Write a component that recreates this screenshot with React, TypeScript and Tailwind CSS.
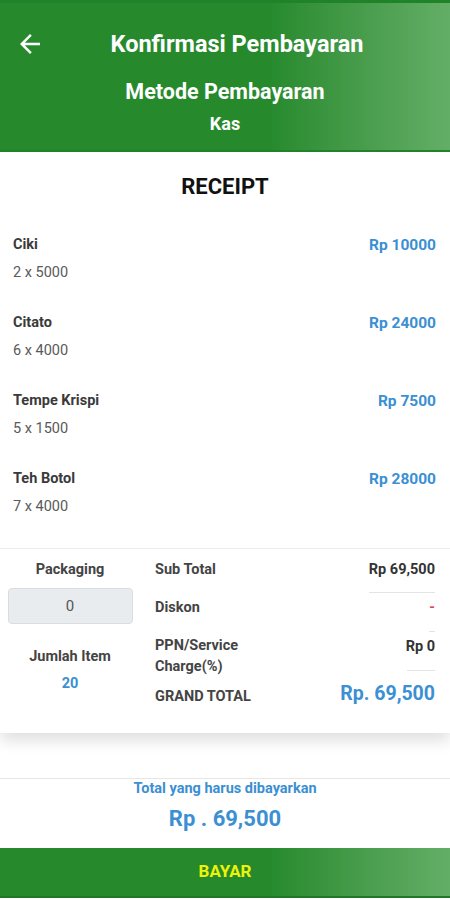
const items = [
  { name: "Ciki", qty: "2 x 5000", price: "Rp 10000" },
  { name: "Citato", qty: "6 x 4000", price: "Rp 24000" },
  { name: "Tempe Krispi", qty: "5 x 1500", price: "Rp 7500" },
  { name: "Teh Botol", qty: "7 x 4000", price: "Rp 28000" },
];

function BackArrow() {
  return (
    <svg viewBox="0 0 24 24" className="w-[30px] h-[30px]" fill="currentColor">
      <path d="M20 11H7.83l5.59-5.59L12 4l-8 8 8 8 1.41-1.41L7.83 13H20v-2z" />
    </svg>
  );
}

export default function App() {
  return (
    <div className="w-[450px] h-[900px] bg-white flex flex-col overflow-hidden font-['Roboto',sans-serif]">
      <header className="h-[152px] shrink-0 bg-gradient-to-r from-[#268a2d] from-60% to-[#63ae67] border-t-[3px] border-b-[2px] border-[#20832a] text-white flex flex-col items-center relative">
        <button className="absolute left-[15px] top-[26px]">
          <BackArrow />
        </button>
        <h1 className="mt-[26px] pl-[24px] text-[23.5px] font-bold leading-[30px]">Konfirmasi Pembayaran</h1>
        <p className="mt-[19px] text-[21.5px] font-bold leading-[28px]">Metode Pembayaran</p>
        <p className="mt-[7px] text-[18px] font-bold leading-[22px]">Kas</p>
      </header>

      <section className="bg-white shadow-[0_8px_14px_rgba(0,0,0,0.12)] pb-[26px]">
        <h2 className="text-center text-[22px] font-bold text-[#111] mt-[20px] leading-[30px]">RECEIPT</h2>
        <div className="mt-[32px] px-[13px]">
          {items.map((it) => (
            <div key={it.name} className="flex justify-between h-[78px]">
              <div>
                <p className="text-[14.5px] font-bold text-[#3a3a3a] leading-[22px]">{it.name}</p>
                <p className="mt-[6px] text-[14.5px] text-[#5a5a5a] leading-[22px]">{it.qty}</p>
              </div>
              <p className="text-[15.5px] font-bold text-[#3b8fd2] leading-[22px] mr-[1px]">{it.price}</p>
            </div>
          ))}
        </div>
        <div className="mt-[2px] border-t border-[#ececec] flex pt-[10px]">
          <div className="w-[140px] flex flex-col items-center">
            <p className="text-[14.5px] font-bold text-[#444] leading-[22px]">Packaging</p>
            <div className="mt-[7px] w-[125px] h-[36px] bg-[#e9ecef] border border-[#d9dde1] rounded-[4px] flex items-center justify-center text-[15px] text-[#555]">
              0
            </div>
            <p className="mt-[22px] text-[14.5px] font-bold text-[#444] leading-[22px]">Jumlah Item</p>
            <p className="mt-[5px] text-[14.5px] font-bold text-[#3b8fd2] leading-[22px]">20</p>
          </div>
          <div className="flex-1 pl-[15px] pr-[15px]">
            <div className="flex justify-between h-[38px]">
              <p className="text-[14.5px] font-bold text-[#444] leading-[22px]">Sub Total</p>
              <div className="flex flex-col items-end">
                <p className="text-[14.5px] font-bold text-[#333] leading-[22px]">Rp 69,500</p>
                <div className="mt-[11px] w-[66px] border-t border-[#e4e4e4]" />
              </div>
            </div>
            <div className="flex justify-between h-[38px]">
              <p className="text-[14.5px] font-bold text-[#444] leading-[22px]">Diskon</p>
              <div className="flex flex-col items-end">
                <p className="text-[14.5px] font-bold text-[#d9455a] leading-[22px]">-</p>
                <div className="mt-[12px] w-[6px] border-t border-[#e4e4e4]" />
              </div>
            </div>
            <div className="flex justify-between">
              <p className="text-[14.5px] font-bold text-[#444] leading-[21px]">
                PPN/Service
                <br />
                Charge(%)
              </p>
              <div className="flex flex-col items-end">
                <p className="text-[14.5px] font-bold text-[#333] leading-[22px] mt-[1px]">Rp 0</p>
                <div className="mt-[12px] w-[28px] border-t border-[#e4e4e4]" />
              </div>
            </div>
            <div className="mt-[4px] flex justify-between items-center h-[26px]">
              <p className="text-[14.5px] font-bold text-[#444] leading-[22px] mt-[6px]">GRAND TOTAL</p>
              <p className="text-[19.5px] font-bold text-[#3b8fd2] leading-[26px]">Rp. 69,500</p>
            </div>
          </div>
        </div>
      </section>

      <div className="mt-[45px] border-t border-[#e6e6e6] flex flex-col items-center">
        <p className="text-[14.5px] font-bold text-[#3b8fd2] leading-[20px]">Total yang harus dibayarkan</p>
        <p className="mt-[6px] text-[22px] font-bold text-[#3b8fd2] leading-[28px]">Rp . 69,500</p>
      </div>

      <button className="mt-[15px] h-[50px] shrink-0 bg-gradient-to-r from-[#268a2d] from-60% to-[#63ae67] border-b-[2px] border-[#1f7a25] flex items-center justify-center text-[17px] font-bold text-[#eef20a]">
        BAYAR
      </button>
    </div>
  );
}
